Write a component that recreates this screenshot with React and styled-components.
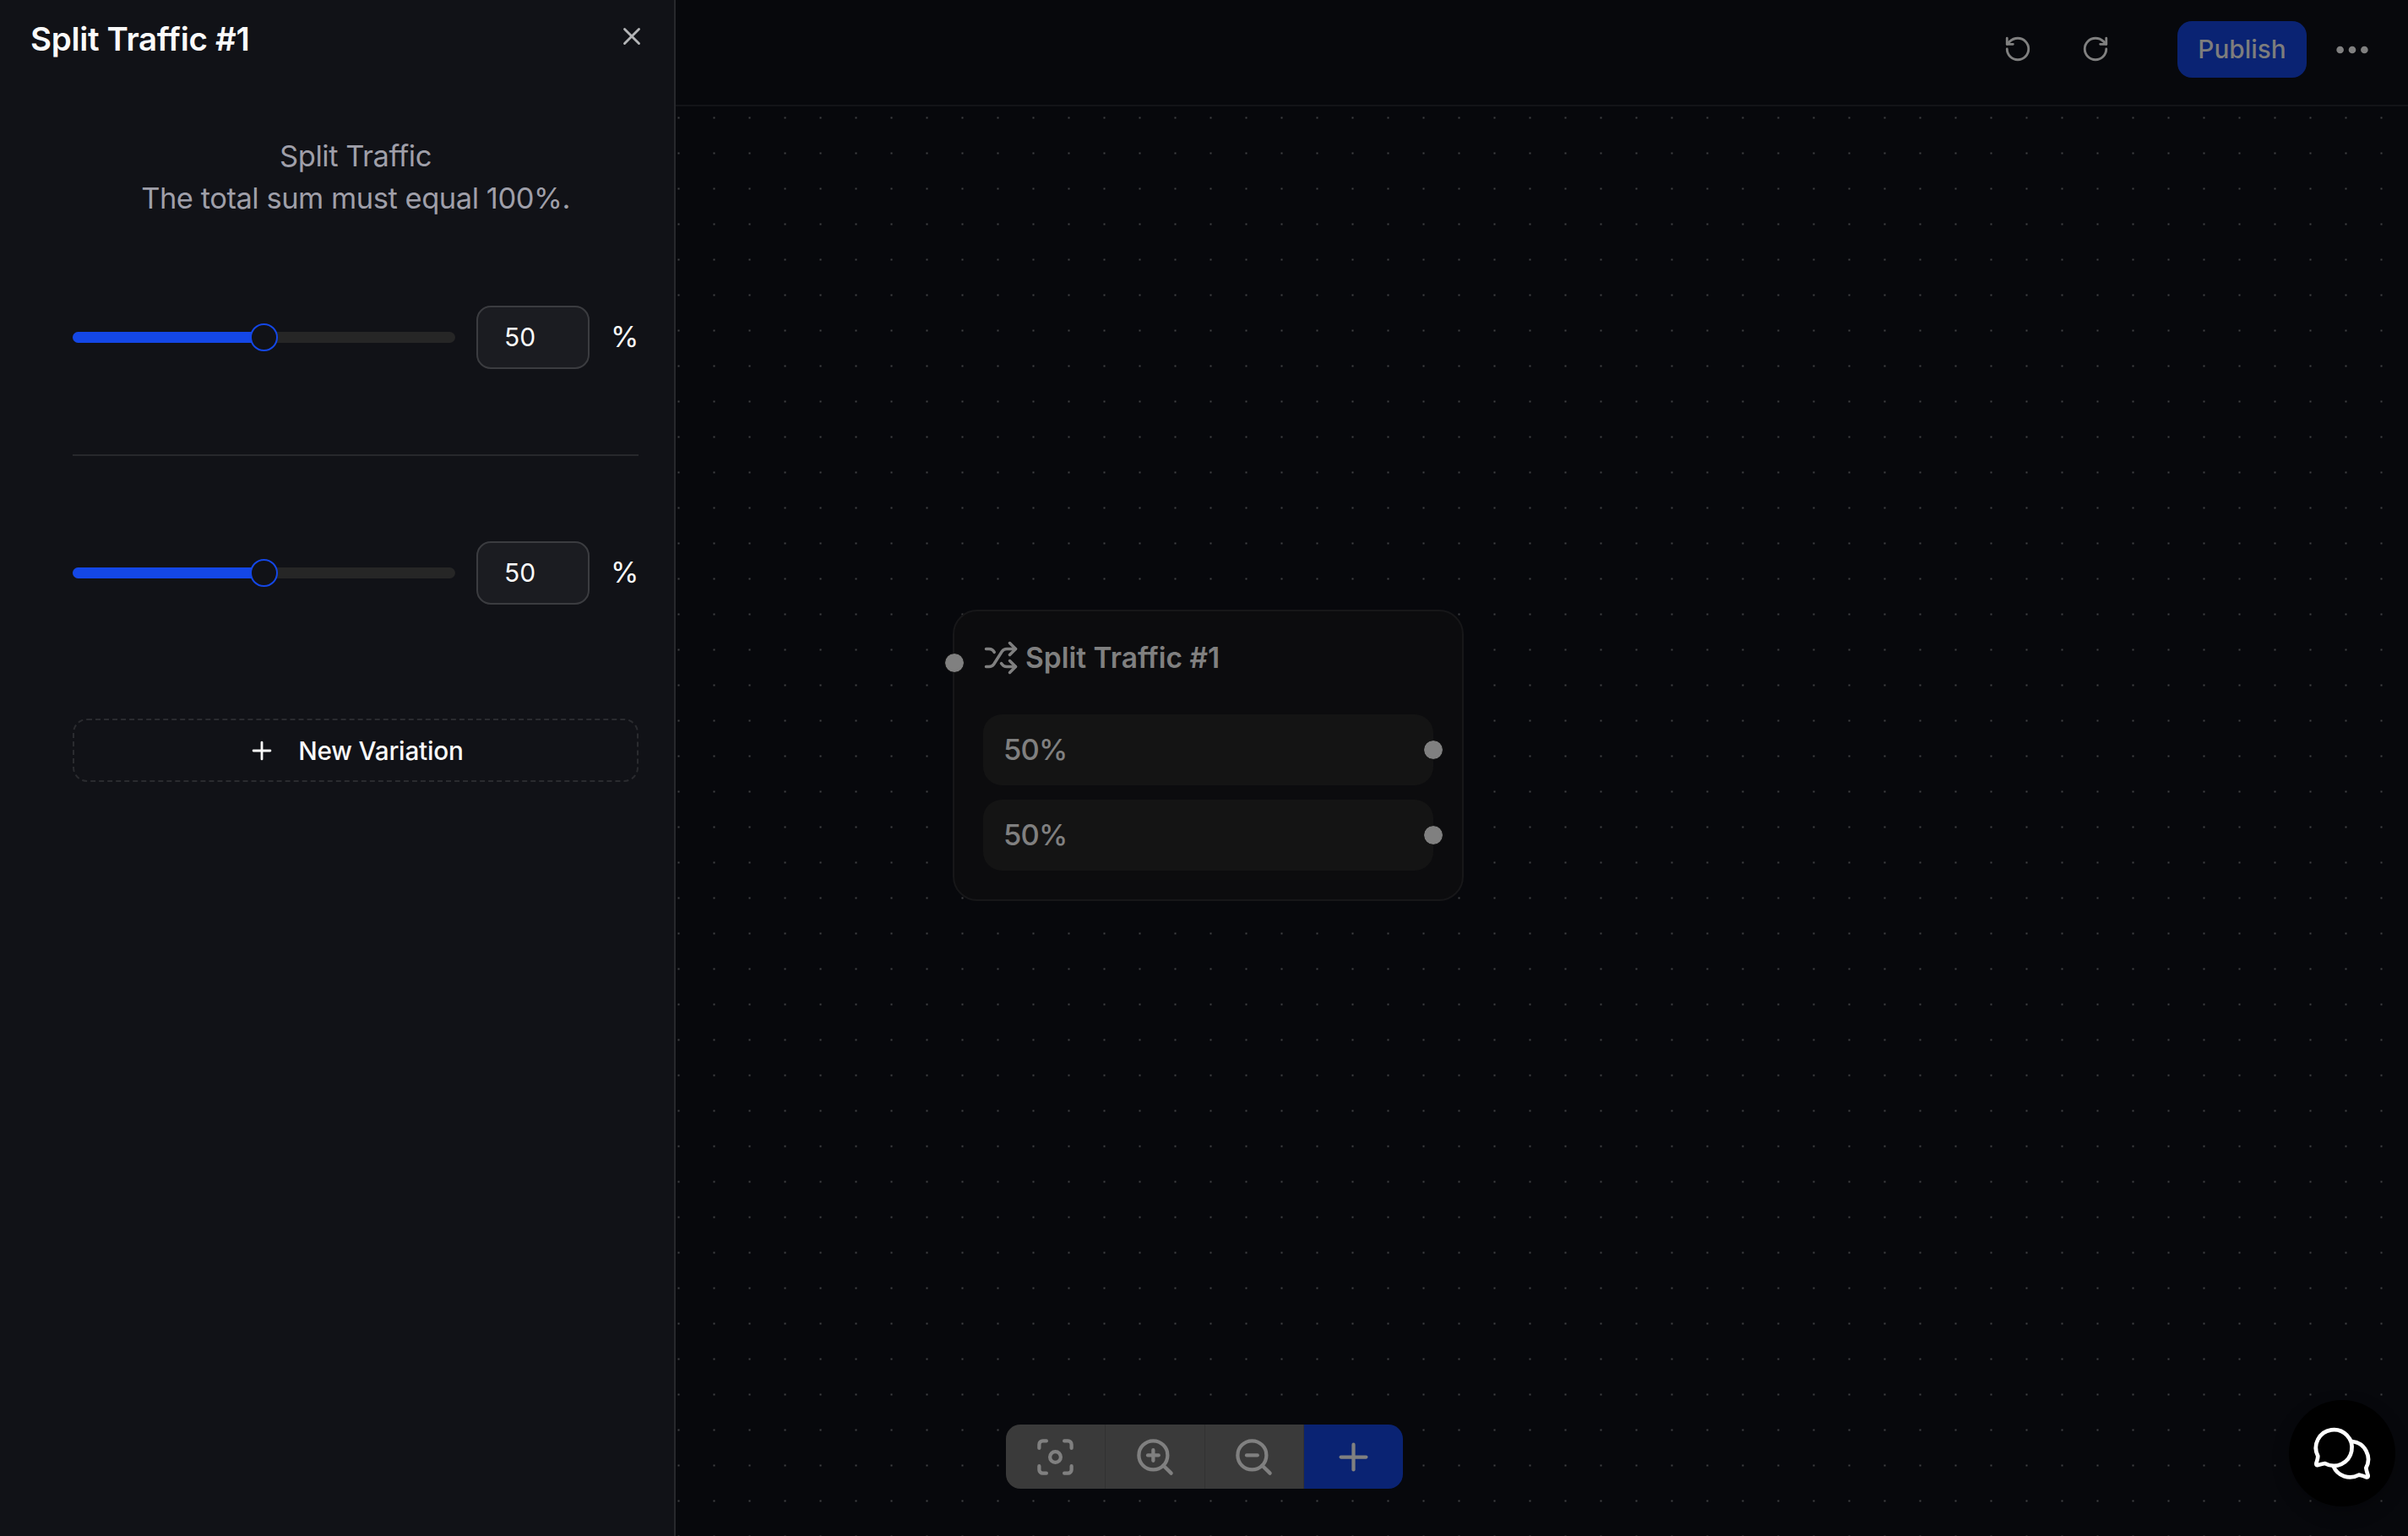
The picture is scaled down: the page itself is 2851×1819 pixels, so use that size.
import React from "react";
import styled, { createGlobalStyle } from "styled-components";
import { X, Plus, RotateCcw, RotateCw, Shuffle, Focus, ZoomIn, ZoomOut } from "lucide-react";
import { BsThreeDots } from "react-icons/bs";

const GlobalStyle = createGlobalStyle`
  *, *::before, *::after { box-sizing: border-box; }
  body {
    margin: 0;
    background: #07080c;
    font-family: Inter, "Liberation Sans", sans-serif;
    overflow: hidden;
  }
  button, input { font-family: inherit; margin: 0; padding: 0; }
  svg { display: block; flex-shrink: 0; }
`;

const Page = styled.div`
  display: flex;
  height: 100vh;
`;

const Sidebar = styled.aside`
  width: 800px;
  flex-shrink: 0;
  display: flex;
  flex-direction: column;
  background: #111217;
  border-right: 2px solid #27282c;
`;

const SidebarHeader = styled.header`
  display: flex;
  align-items: flex-start;
  justify-content: space-between;
  height: 94px;
  padding: 23px 33px 0 36px;
`;

const Title = styled.h2`
  margin: 0;
  font-size: 38.5px;
  line-height: 46px;
  letter-spacing: -0.33px;
  font-weight: 600;
  color: #fafafa;
`;

const CloseButton = styled.button`
  display: flex;
  border: 0;
  margin-top: 3px;
  background: none;
  color: #b4b5b7;
`;

const SidebarBody = styled.div`
  display: flex;
  flex-direction: column;
  padding: 66px 42px 0 86px;
`;

const Intro = styled.p`
  margin: 0 0 102px;
  text-align: center;
  font-size: 34.5px;
  line-height: 50px;
  letter-spacing: -0.47px;
  color: #9f9fa9;
`;

const Variation = styled.div`
  display: flex;
  align-items: center;
  height: 75px;
`;

const Track = styled.div`
  display: flex;
  align-items: center;
  flex-shrink: 0;
  width: 453px;
  height: 13px;
  border-radius: 7px;
  background: #262626;
`;

const Range = styled.div`
  height: 13px;
  border-radius: 7px 0 0 7px;
  background: #1447e6;
`;

const Thumb = styled.div`
  width: 33px;
  height: 33px;
  flex-shrink: 0;
  margin-left: -17px;
  border-radius: 50%;
  border: 2px solid #1447e6;
  background: #111217;
`;

const PercentInput = styled.input`
  flex-shrink: 0;
  width: 134px;
  height: 75px;
  margin-left: 25px;
  padding: 0 0 1px 31px;
  border: 2px solid #3b3c40;
  border-radius: 17px;
  background: #1b1c21;
  color: #fafafa;
  font-size: 30px;
  outline: none;
`;

const Unit = styled.span`
  margin: 0 0 1px 25px;
  font-size: 34px;
  line-height: 50px;
  color: #fafafa;
`;

const Divider = styled.hr`
  width: 100%;
  height: 2px;
  margin: 101px 0;
  border: 0;
  background: #27282c;
`;

const NewVariation = styled.button`
  display: flex;
  align-items: center;
  justify-content: center;
  gap: 26px;
  height: 75px;
  margin-top: 135px;
  border: 2px dashed #2a2b2f;
  border-radius: 17px;
  background: none;
  color: #fafafa;
  font-size: 29.75px;
  letter-spacing: -0.22px;
  font-weight: 500;
`;

const Main = styled.main`
  flex: 1;
  display: flex;
  flex-direction: column;
`;

const TopBar = styled.header`
  display: flex;
  align-items: center;
  justify-content: flex-end;
  height: 126px;
  padding: 0 43px 7px 0;
  border-bottom: 2px solid #131418;
  color: #808080;
`;

const HistoryButton = styled.button`
  display: flex;
  margin: 0 58px 1px 0;
  border: 0;
  background: none;
  color: inherit;
`;

const PublishButton = styled.button`
  width: 153px;
  height: 67px;
  margin: 0 31px 0 22px;
  padding-bottom: 2px;
  border: 0;
  border-radius: 17px;
  background: #0a2373;
  color: #7d7d7d;
  font-size: 29.75px;
  font-weight: 500;
`;

const Canvas = styled.section`
  position: relative;
  flex: 1;
  background-image: radial-gradient(circle at 50% 50%, #414245 0.7px, transparent 1.5px);
  background-size: 42px 42px;
  background-position: -17.5px -7.5px;
`;

const Node = styled.div`
  position: absolute;
  left: 328px;
  top: 596px;
  width: 605px;
  height: 345px;
  display: flex;
  flex-direction: column;
  gap: 17px;
  padding: 34px 34px 32px;
  border: 2px solid #171719;
  border-radius: 29px;
  background: #0c0c0e;
  color: #808080;
`;

const NodeTitle = styled.div`
  display: flex;
  align-items: center;
  gap: 8px;
  height: 42px;
  margin-bottom: 29px;
  font-size: 33.5px;
  font-weight: 600;
`;

const Outlet = styled.div`
  position: relative;
  display: flex;
  align-items: center;
  height: 84px;
  padding: 0 0 2px 24px;
  border-radius: 22px;
  background: #141414;
  font-size: 34.5px;
  letter-spacing: -0.8px;
  font-weight: 500;
`;

const Handle = styled.span`
  position: absolute;
  top: ${(p) => p.$top};
  ${(p) => p.$side}: -12px;
  width: 24px;
  height: 24px;
  margin-top: -12px;
  border: 1.5px solid #141414;
  border-radius: 50%;
  background: #808080;
  background-clip: padding-box;
`;

const Controls = styled.div`
  position: absolute;
  left: 391px;
  bottom: 56px;
  display: flex;
  width: 470px;
  height: 76px;
  border-radius: 17px;
  overflow: hidden;
`;

const ControlButton = styled.button`
  flex: 1;
  display: flex;
  align-items: center;
  justify-content: center;
  border: 0;
  border-right: ${(p) => (p.$primary ? "0" : "1px solid #323232")};
  background: ${(p) => (p.$primary ? "#0a2373" : "#3a3a3a")};
  color: #808080;
`;

const ChatButton = styled.button`
  position: absolute;
  right: 15px;
  bottom: 35px;
  width: 126px;
  height: 126px;
  display: flex;
  align-items: center;
  justify-content: center;
  border: 0;
  border-radius: 50%;
  background: #000;
  color: #fff;
  box-shadow: 0 8px 20px rgba(0, 0, 0, 0.25);
`;

function ChatIcon() {
  return (
    <svg
      width="126"
      height="126"
      viewBox="180 113 378 378"
      fill="none"
      stroke="currentColor"
      strokeWidth="14"
      strokeLinecap="round"
      strokeLinejoin="round"
    >
      <path d="M283 312A64 64 0 1 1 308 338Q300 339 283 344Q276 346 277 338Q283 320 283 312Z" />
      <path d="M405 260A64 64 0 0 1 454 354Q455 363 461 381Q462 388 455 387Q438 380 428 379A64 64 0 0 1 338 348" />
    </svg>
  );
}

function VariationRow({ value }) {
  return (
    <Variation>
      <Track>
        <Range style={{ width: `${value}%` }} />
        <Thumb />
      </Track>
      <PercentInput defaultValue={value} />
      <Unit>%</Unit>
    </Variation>
  );
}

export default function App() {
  return (
    <Page>
      <GlobalStyle />
      <Sidebar>
        <SidebarHeader>
          <Title>Split Traffic #1</Title>
          <CloseButton aria-label="Close">
            <X size={34} />
          </CloseButton>
        </SidebarHeader>
        <SidebarBody>
          <Intro>
            Split Traffic
            <br />
            The total sum must equal 100%.
          </Intro>
          <VariationRow value={50} />
          <Divider />
          <VariationRow value={50} />
          <NewVariation>
            <Plus size={34} />
            New Variation
          </NewVariation>
        </SidebarBody>
      </Sidebar>
      <Main>
        <TopBar>
          <HistoryButton aria-label="Undo">
            <RotateCcw size={34} />
          </HistoryButton>
          <HistoryButton aria-label="Redo">
            <RotateCw size={34} />
          </HistoryButton>
          <PublishButton>Publish</PublishButton>
          <BsThreeDots size={46} />
        </TopBar>
        <Canvas>
          <Node>
            <Handle $side="left" $top="61px" />
            <NodeTitle>
              <Shuffle size={42} />
              Split Traffic #1
            </NodeTitle>
            <Outlet>
              50%
              <Handle $side="right" $top="50%" />
            </Outlet>
            <Outlet>
              50%
              <Handle $side="right" $top="50%" />
            </Outlet>
          </Node>
          <Controls>
            <ControlButton aria-label="Fit view">
              <Focus size={51} />
            </ControlButton>
            <ControlButton aria-label="Zoom in">
              <ZoomIn size={51} />
            </ControlButton>
            <ControlButton aria-label="Zoom out">
              <ZoomOut size={51} />
            </ControlButton>
            <ControlButton $primary aria-label="Add">
              <Plus size={51} />
            </ControlButton>
          </Controls>
          <ChatButton aria-label="Chat">
            <ChatIcon />
          </ChatButton>
        </Canvas>
      </Main>
    </Page>
  );
}
